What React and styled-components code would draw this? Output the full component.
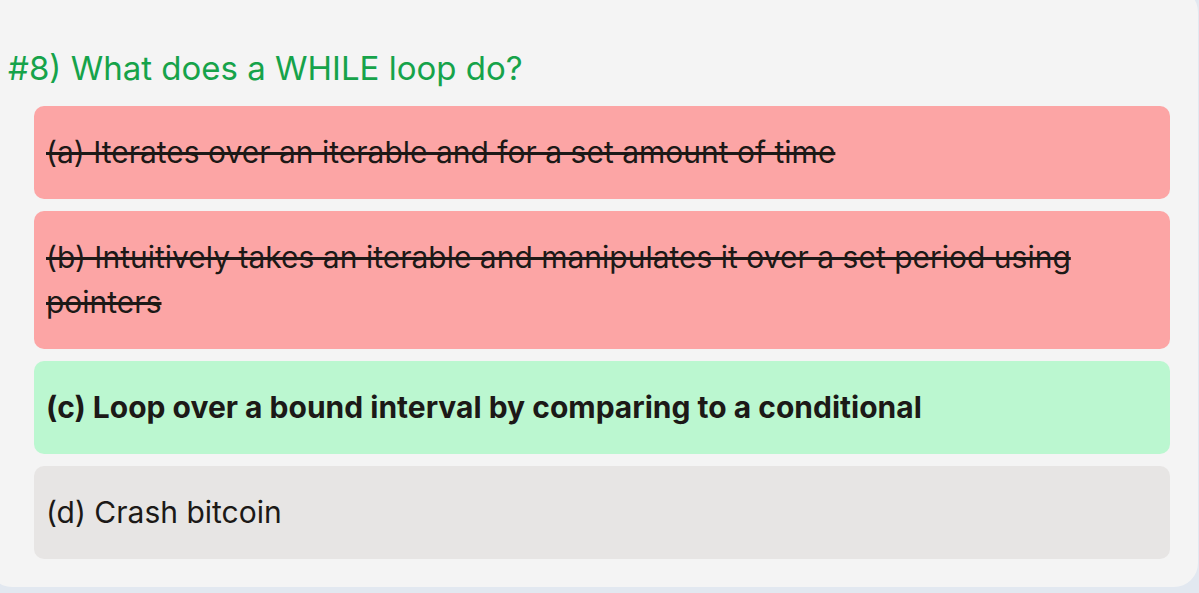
import React from "react";
import styled, { createGlobalStyle } from "styled-components";

const Global = createGlobalStyle`
  html, body { margin: 0; padding: 0; }
  body {
    background: #e2e8f0;
    font-family: Inter, "Noto Sans", sans-serif;
    overflow: hidden;
  }
`;

const Card = styled.section`
  box-sizing: border-box;
  width: 1210px;
  margin: -12px 0 0 -12px;
  padding: 60px 28px 28px 20px;
  background: #f4f4f4;
  border-radius: 24px;
`;

const Title = styled.h2`
  margin: 0 0 18px;
  font-size: 33px;
  line-height: 40px;
  font-weight: 400;
  color: #16a34a;
`;

const Options = styled.ul`
  list-style: none;
  margin: 0 0 0 26px;
  padding: 0;
  display: flex;
  flex-direction: column;
  gap: 12px;
`;

const bg = { wrong: "#fca5a5", right: "#bbf7d0", neutral: "#e7e5e4" };

const Option = styled.li`
  padding: 24px 12px;
  border-radius: 10px;
  background: ${(p) => bg[p.$state]};
  color: #1c1917;
  font-size: 30px;
  line-height: 45px;
  font-weight: ${(p) => (p.$state === "right" ? 700 : 400)};
  text-decoration: ${(p) => (p.$state === "wrong" ? "line-through" : "none")};
  text-decoration-thickness: 3px;
`;

const options = [
  { text: "(a) Iterates over an iterable and for a set amount of time", state: "wrong" },
  { text: "(b) Intuitively takes an iterable and manipulates it over a set period using pointers", state: "wrong" },
  { text: "(c) Loop over a bound interval by comparing to a conditional", state: "right" },
  { text: "(d) Crash bitcoin", state: "neutral" },
];

export default function App() {
  return (
    <>
      <Global />
      <Card>
        <Title>#8) What does a WHILE loop do?</Title>
        <Options>
          {options.map((o) => (
            <Option key={o.text} $state={o.state}>
              {o.text}
            </Option>
          ))}
        </Options>
      </Card>
    </>
  );
}
